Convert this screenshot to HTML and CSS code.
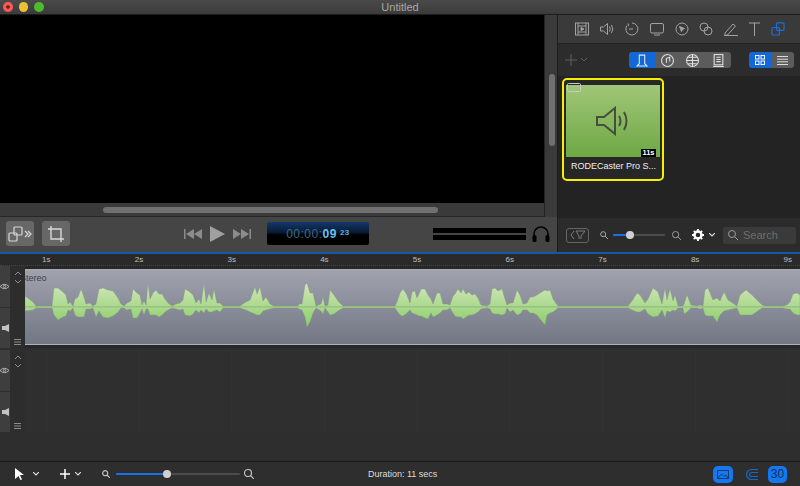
FILE: index.html
```html
<!DOCTYPE html>
<html>
<head>
  <title>Untitled</title>
  <link rel="stylesheet" href="styles.css">
</head>
<body>
  <div class="titlebar">
    <div class="lights">
      <span class="light red"></span>
      <span class="light yellow"></span>
      <span class="light green"></span>
    </div>
    <div class="title">Untitled</div>
  </div>

  <div class="main">
    <div class="stage">
      <div class="stage-top">
        <div class="viewer">
          <div class="preview"></div>
          <div class="hscroll"><div class="hthumb"></div></div>
        </div>
        <div class="vscroll"><div class="vthumb"></div></div>
      </div>
      <div class="controls">
        <button class="square-btn">
          <svg width="26" height="18" viewBox="0 0 26 18" fill="none" stroke="#d8d8d8" stroke-width="1.2"><rect x="7" y="2" width="8" height="8" rx="1"/><rect x="2" y="8" width="8" height="8" rx="1"/><path d="M18 6l3 3-3 3M21 6l3 3-3 3"/></svg>
        </button>
        <button class="square-btn">
          <svg width="18" height="18" viewBox="0 0 18 18" fill="none" stroke="#d8d8d8" stroke-width="1.4"><path d="M4 1v13h13M1 4h13v13"/></svg>
        </button>
        <div class="transport">
          <svg width="18" height="10" viewBox="0 0 18 10" fill="#8c8c8c"><rect width="1.5" height="10"/><path d="M10 0v10L2 5zM18 0v10L10 5z"/></svg>
          <svg width="15" height="16" viewBox="0 0 15 16" fill="#a0a0a0"><path d="M0 0l15 8L0 16z"/></svg>
          <svg width="18" height="10" viewBox="0 0 18 10" fill="#8c8c8c"><rect x="16.5" width="1.5" height="10"/><path d="M0 0v10l8-5zM8 0v10l8-5z"/></svg>
        </div>
        <div class="timecode"><span class="tc-dim">00:00:</span><b class="tc-sec">09</b><span class="tc-frames">23</span></div>
        <div class="meters"><div class="meter"></div><div class="meter"></div></div>
        <svg class="phones" width="18" height="16" viewBox="0 0 18 16" fill="none" stroke="#000" stroke-width="1.6"><path d="M2 11V8a7 7 0 0 1 14 0v3"/><rect x="0.5" y="9" width="4" height="7" rx="1.5" fill="#000" stroke="none"/><rect x="13.5" y="9" width="4" height="7" rx="1.5" fill="#000" stroke="none"/></svg>
      </div>
    </div>

    <div class="library">
      <div class="tools">
        <svg width="14" height="14" viewBox="0 0 14 14" fill="none" stroke="#a2a2a2"><rect x="0.5" y="1" width="13" height="12"/><path d="M3 1v12M11 1v12M3 4h8M3 10h8"/><path d="M6 5.5l3 1.5-3 1.500z" fill="#a2a2a2"/></svg>
        <svg width="14" height="14" viewBox="0 0 14 14" fill="none" stroke="#a2a2a2"><path d="M0.500 5h3l4-3.500v11l-4-3.500h-3zM9.500 4.500q1.500 2.500 0 5M11.500 3q2.500 4 0 8"/></svg>
        <svg width="14" height="14" viewBox="0 0 14 14" fill="none" stroke="#a2a2a2"><path d="M7 1a6 6 0 1 1-5 2.500"/><path d="M3 1.500l.5 2.500M4 7h4"/></svg>
        <svg width="14" height="14" viewBox="0 0 14 14" fill="none" stroke="#a2a2a2"><rect x="0.500" y="1.500" width="13" height="9.500" rx="1.500"/><path d="M4 13h6"/></svg>
        <svg width="14" height="14" viewBox="0 0 14 14" fill="none" stroke="#a2a2a2"><circle cx="7" cy="7" r="6"/><path d="M4.500 4.500l5 2-2 1-1 2z" fill="#a2a2a2"/></svg>
        <svg width="14" height="14" viewBox="0 0 14 14" fill="none" stroke="#a2a2a2"><circle cx="5" cy="5" r="4"/><circle cx="9" cy="9" r="4"/></svg>
        <svg width="14" height="14" viewBox="0 0 14 14" fill="none" stroke="#a2a2a2"><path d="M1 11l8-9 2.500 2-8 9-2.500.5zM0 13.500h14"/></svg>
        <svg width="11" height="14" viewBox="0 0 11 14" fill="none" stroke="#a2a2a2"><path d="M0 1h11M5.500 1v13"/></svg>
        <svg width="14" height="14" viewBox="0 0 14 14" fill="none" stroke="#1a6fd8" stroke-width="1.200"><rect x="5.500" y="0.800" width="7.500" height="7.500" rx="1"/><rect x="1" y="5.500" width="7.500" height="7.500" rx="1"/></svg>
      </div>

      <div class="lib-bar">
        <svg class="lib-plus" width="12" height="12" viewBox="0 0 12 12" stroke="#5e5e5e"><path d="M6 0v12M0 6h12"/></svg>
        <svg class="lib-chev" width="6" height="4" viewBox="0 0 6 4" fill="none" stroke="#5e5e5e"><path d="M0 0l3 3 3-3"/></svg>
        <div class="segments">
          <div class="seg on"><svg width="12" height="13" viewBox="0 0 11 12" fill="none" stroke="#e8e8e8"><path d="M3 1h5v8l2 2H1l2-2z"/></svg></div>
          <div class="seg"><svg width="13" height="13" viewBox="0 0 12 12" fill="none" stroke="#e0e0e0"><circle cx="6" cy="6" r="5.500"/><path d="M5 8V4l3-1v4"/></svg></div>
          <div class="seg"><svg width="13" height="13" viewBox="0 0 12 12" fill="none" stroke="#e0e0e0"><circle cx="6" cy="6" r="5.500"/><path d="M0.500 6h11M6 .5v11M2 3h8M2 9h8"/></svg></div>
          <div class="seg"><svg width="11" height="13" viewBox="0 0 10 12" fill="none" stroke="#e0e0e0"><rect x="1" y="0.500" width="8" height="9.500"/><path d="M3 3h4M3 5h4M3 7h4M0 11.500h10"/></svg></div>
        </div>
        <div class="view-toggle">
          <div class="vt on"><svg width="10" height="10" viewBox="0 0 10 10" fill="none" stroke="#fff"><rect x="0.500" y="0.500" width="3.500" height="3.500"/><rect x="6" y="0.500" width="3.500" height="3.500"/><rect x="0.500" y="6" width="3.500" height="3.500"/><rect x="6" y="6" width="3.500" height="3.500"/></svg></div>
          <div class="vt"><svg width="11" height="9" viewBox="0 0 11 9" stroke="#ddd"><path d="M0 .5h11M0 3.200h11M0 5.800h11M0 8.500h11"/></svg></div>
        </div>
      </div>

      <div class="bin">
        <div class="card">
          <div class="thumb">
            <svg class="thumb-check" width="14" height="10" viewBox="0 0 14 10" fill="none" stroke="#c9c9c9"><rect x="0.500" y="0.500" width="13" height="8" rx="1"/></svg>
            <svg width="34" height="30" viewBox="0 0 34 30" fill="none" stroke="#454f3c" stroke-width="2"><path d="M1 11h7L19 2v26L8 19H1zM23 10q3 5 0 10M28 6q5 9 0 18"/></svg>
            <span class="badge">11s</span>
          </div>
          <div class="card-name">RODECaster Pro S...</div>
        </div>
      </div>

      <div class="lib-foot">
        <div class="filter-btn"><svg width="16" height="10" viewBox="0 0 16 10" fill="none" stroke="#7c7c7c"><path d="M4 1L1 5l3 4M6 1h9l-4 5v3M6 1l3 5v3"/></svg></div>
        <svg class="zoom-s" width="8" height="8" viewBox="0 0 8 8" fill="none" stroke="#a8a8a8"><circle cx="3.200" cy="3.200" r="2.500"/><path d="M5 5l3 3"/></svg>
        <div class="slider lib-slider"><div class="slider-fill"></div><div class="slider-knob"></div></div>
        <svg class="zoom-l" width="9" height="9" viewBox="0 0 10 10" fill="none" stroke="#a8a8a8"><circle cx="4" cy="4" r="3.500"/><path d="M6.500 6.500L10 10"/></svg>
        <svg class="gear" width="12" height="12" viewBox="0 0 12 12"><circle cx="6" cy="6" r="3.500" fill="none" stroke="#fff" stroke-width="2.500"/><path d="M6 0v12M0 6h12M1.800 1.800l8.400 8.400M10.200 1.800l-8.400 8.400" stroke="#fff" stroke-width="1.800" stroke-dasharray="2 8"/></svg>
        <svg class="gear-chev" width="6" height="4" viewBox="0 0 6 4" fill="none" stroke="#ddd" stroke-width="1.200"><path d="M0 0l3 3 3-3"/></svg>
        <div class="search">
          <svg width="10" height="10" viewBox="0 0 10 10" fill="none" stroke="#9a9a9a"><circle cx="4" cy="4" r="3.500"/><path d="M6.500 6.500L10 10"/></svg>
          <span>Search</span>
        </div>
      </div>
    </div>
  </div>

  <div class="blue-line"></div>

  <div class="ruler">
    <span>1s</span><span>2s</span><span>3s</span><span>4s</span><span>5s</span><span>6s</span><span>7s</span><span>8s</span><span>9s</span>
  </div>

  <div class="track track-audio">
    <div class="track-strip">
      <div class="strip-cell">
        <svg width="9" height="7" viewBox="0 0 11 7" fill="none" stroke="#c4c4c4"><path d="M0 3.500Q5.500-2 11 3.500 5.500 9 0 3.500z"/><circle cx="5.500" cy="3.500" r="1.500"/></svg>
      </div>
      <div class="strip-cell">
        <svg width="7" height="8" viewBox="0 0 7 8" fill="#c4c4c4"><path d="M0 2h3l4-2v8L3 6H0z"/></svg>
      </div>
    </div>
    <div class="track-side">
      <svg width="6" height="11" viewBox="0 0 6 11" fill="none" stroke="#8c8c8c"><path d="M0 3l3-3 3 3M0 8l3 3 3-3"/></svg>
      <svg width="7" height="6" viewBox="0 0 7 6" stroke="#8c8c8c"><path d="M0 .5h7M0 3h7M0 5.500h7"/></svg>
    </div>
    <div class="clip">
      <span class="clip-label">Stereo</span>
      <svg class="wave" width="775" height="75" viewBox="25 -37 775 75">
        <defs>
          <linearGradient id="waveFill" gradientUnits="userSpaceOnUse" x1="0" y1="-22" x2="0" y2="18">
            <stop offset="0" stop-color="#cfe5b8"/>
            <stop offset="1" stop-color="#8ccf68"/>
          </linearGradient>
        </defs>
        <polygon fill="url(#waveFill)" stroke="#7f9a78" stroke-width="0.400" points="25,0 25,-11 33,-5 36,-1 52,-1 54,-19 58,-19 63,-15 66,-12 68,-3 70,-5 73,-1 75,-8 78,-10 81,-18 84,-10 86,-3 90,-4 93,-1 96,-3 99,-18 103,-19 108,-17 113,-16 118,-9 121,-3 124,-1 127,-4 131,-6 133,-18 137,-14 140,-12 142,-2 144,-6 146,-2 148,-24 150,-8 153,-14 156,-17 159,-13 162,-13 165,-8 168,-4 172,-1 176,-3 180,-4 183,-7 185,-18 190,-15 193,-12 196,-4 199,-8 201,-3 204,-24 206,-5 209,-14 212,-7 214,-18 217,-4 220,-4 223,-1 240,-1 246,-5 250,-7 255,-20 257,-13 260,-20 263,-6 266,-10 270,-3 274,-1 298,-1 299,-3 302,-3 305,-22 307,-24 310,-14 313,-14 316,-1 321,-3 323,-10 325,-1 328,-2 330,-17 334,-12 338,-6 343,-1 395,-1 397,-5 400,-14 403,-18 407,-12 410,-4 412,-15 415,-16 417,-9 419,-13 421,-18 425,-18 428,-12 431,-8 433,-3 437,-14 440,-14 443,-3 447,-3 450,-2 453,-11 455,-13 458,-18 461,-14 463,-18 466,-13 469,-15 472,-12 475,-13 478,-9 481,-2 487,-1 490,-3 492,-18 495,-19 498,-16 502,-18 505,-8 507,-2 510,-4 513,-4 517,-17 520,-12 523,-3 527,-4 530,-10 533,-10 537,-12 540,-14 545,-17 547,-16 550,-17 553,-8 558,-1 628,-1 632,-6 637,-14 640,-12 645,-4 648,-8 653,-19 658,-15 662,-3 665,-19 667,-7 670,-18 673,-6 675,-12 678,-1 683,-1 684,-3 687,-12 691,-2 697,-1 700,-2 703,-1 705,-17 708,-19 713,-7 717,-9 720,-6 724,-15 728,-7 737,-1 740,-12 746,-17 752,-12 762,-2 765,-1 783,-1 787,-2 790,-5 793,-13 797,-14 800,-12 800,0"/>
        <polygon fill="url(#waveFill)" stroke="#7f9a78" stroke-width="0.400" points="25,0 25,4 33,3 36,1 52,1 54,8 58,13 63,10 66,9 68,3 70,4 73,1 75,8 78,10 81,10 84,10 86,2 90,2 93,1 96,10 99,4 103,10 108,11 113,9 118,5 121,1 124,1 127,3 131,2 133,11 137,11 140,6 142,2 144,8 146,2 148,2 150,8 153,8 156,8 159,10 162,8 165,5 168,3 172,1 176,2 180,3 183,2 185,8 190,9 193,7 196,3 199,6 201,3 204,6 206,2 209,5 212,5 214,4 217,3 220,5 223,1 240,1 246,3 250,5 255,7 257,8 260,8 263,4 266,3 270,2 274,1 298,1 299,2 302,3 305,10 307,20 310,15 313,6 316,1 321,4 323,7 325,1 328,5 330,8 334,7 338,4 343,1 395,1 397,4 400,8 403,9 407,6 410,3 412,6 415,7 417,8 419,9 421,9 425,11 428,12 431,6 433,10 437,8 440,6 443,3 447,3 450,1 453,6 455,9 458,10 461,10 463,12 466,10 469,8 472,8 475,7 478,5 481,2 487,1 490,2 492,6 495,7 498,7 502,8 505,7 507,1 510,5 513,3 517,8 520,7 523,3 527,3 530,6 533,6 537,8 540,12 545,18 547,8 550,6 553,5 558,1 628,1 632,3 637,5 640,5 645,2 648,7 653,10 658,9 662,3 665,11 667,4 670,5 673,3 675,4 678,1 683,1 684,7 687,5 691,1 697,1 700,2 703,1 705,8 708,9 713,9 717,15 720,8 724,4 728,3 737,1 740,8 746,8 752,8 762,1 765,1 783,1 787,2 790,2 793,6 797,8 800,8 800,0"/>
      </svg>
    </div>
  </div>

  <div class="track track-empty">
    <div class="track-strip">
      <div class="strip-cell">
        <svg width="9" height="7" viewBox="0 0 11 7" fill="none" stroke="#c4c4c4"><path d="M0 3.500Q5.500-2 11 3.500 5.500 9 0 3.500z"/><circle cx="5.500" cy="3.500" r="1.500"/></svg>
      </div>
      <div class="strip-cell">
        <svg width="7" height="8" viewBox="0 0 7 8" fill="#c4c4c4"><path d="M0 2h3l4-2v8L3 6H0z"/></svg>
      </div>
    </div>
    <div class="track-side">
      <svg width="6" height="11" viewBox="0 0 6 11" fill="none" stroke="#8c8c8c"><path d="M0 3l3-3 3 3M0 8l3 3 3-3"/></svg>
      <svg width="7" height="6" viewBox="0 0 7 6" stroke="#8c8c8c"><path d="M0 .5h7M0 3h7M0 5.500h7"/></svg>
    </div>
    <div class="lane"></div>
  </div>

  <div class="spacer"></div>

  <div class="bottombar">
    <svg class="b-arrow" width="9" height="12" viewBox="0 0 9 12" fill="#fff"><path d="M0 0l9 7H5l2 4.500-1.500.5L3.500 8 0 11z"/></svg>
    <svg class="b-chev" width="6" height="4" viewBox="0 0 6 4" fill="none" stroke="#ddd" stroke-width="1.200"><path d="M0 0l3 3 3-3"/></svg>
    <svg class="b-plus" width="10" height="10" viewBox="0 0 10 10" stroke="#fff" stroke-width="1.500"><path d="M5 0v10M0 5h10"/></svg>
    <svg class="b-chev b-chev-near" width="6" height="4" viewBox="0 0 6 4" fill="none" stroke="#ddd" stroke-width="1.200"><path d="M0 0l3 3 3-3"/></svg>
    <svg class="b-zoom-s" width="8" height="8" viewBox="0 0 8 8" fill="none" stroke="#c0c0c0" stroke-width="1.200"><circle cx="3.200" cy="3.200" r="2.500"/><path d="M5 5l3 3"/></svg>
    <div class="slider b-slider"><div class="slider-fill"></div><div class="slider-knob"></div></div>
    <svg class="b-zoom-l" width="10" height="10" viewBox="0 0 10 10" fill="none" stroke="#c0c0c0" stroke-width="1.200"><circle cx="4" cy="4" r="3.500"/><path d="M6.500 6.500L10 10"/></svg>
    <div class="duration">Duration: 11 secs</div>
    <div class="pill"><svg width="12" height="9" viewBox="0 0 12 9" fill="none" stroke="#143c70"><rect x="0.500" y="0.500" width="11" height="8"/><path d="M1 8l3.500-4 2.500 2.500L9 5l2 3" /></svg></div>
    <svg class="magnet" width="13" height="13" viewBox="0 0 13 13" fill="none" stroke="#1668c8" stroke-width="1.200"><path d="M13 1.500H6.500a5 5 0 0 0 0 10H13M13 4.500H6.500a2 2 0 0 0 0 4H13"/></svg>
    <div class="pill pill-num">30</div>
  </div>
</body>
</html>
```

FILE: styles.css
```css
* {
  box-sizing: border-box;
}

body {
  margin: 0;
  width: 800px;
  height: 486px;
  overflow: hidden;
  display: flex;
  flex-direction: column;
  background-color: #2e2e2e;
  font-family: "Liberation Sans", Arial, sans-serif;
  color: #ddd;
}

svg {
  display: block;
  flex: none;
}

/* title bar */
.titlebar {
  height: 15px;
  flex: none;
  display: flex;
  align-items: center;
  background: linear-gradient(#4a4a4a, #3b3b3b);
  border-bottom: 1px solid #1c1c1c;
}

.lights {
  width: 44px;
  flex: none;
  display: flex;
  gap: 6px;
  padding-left: 3px;
}

.light {
  width: 10px;
  height: 10px;
  border-radius: 50%;
}

.red {
  background: radial-gradient(#8c1414 0 1.500px, #f85a55 2px);
}

.yellow {
  background-color: #e9c22f;
}

.green {
  background-color: #4dbb2e;
}

.title {
  flex: 1;
  padding-right: 44px;
  text-align: center;
  font-size: 11px;
  color: #a8a8a8;
}

/* top half */
.main {
  height: 237px;
  flex: none;
  display: flex;
}

.stage {
  width: 557px;
  flex: none;
  display: flex;
  flex-direction: column;
}

.stage-top {
  height: 202px;
  flex: none;
  display: flex;
}

.viewer {
  width: 544px;
  display: flex;
  flex-direction: column;
}

.preview {
  height: 188px;
  background-color: #000;
}

.hscroll {
  height: 14px;
  padding: 4px 0 0 103px;
  background-color: #3a3a3a;
  border-bottom: 1px solid #272727;
}

.hthumb {
  width: 335px;
  height: 6px;
  border-radius: 3px;
  background-color: #707070;
}

.vscroll {
  width: 13px;
  padding: 59px 0 0 4px;
  background-color: #3a3a3a;
  border-left: 1px solid #222;
}

.vthumb {
  width: 6px;
  height: 72px;
  border-radius: 3px;
  background-color: #707070;
}

.controls {
  flex: 1;
  display: flex;
  align-items: center;
  padding: 0 0 2px 6px;
  background-color: #454545;
}

.square-btn {
  width: 28px;
  height: 25px;
  margin-right: 8px;
  padding: 0;
  border: none;
  border-radius: 3px;
  background-color: #676767;
  display: flex;
  align-items: center;
  justify-content: center;
}

.transport {
  margin-left: 106px;
  width: 67px;
  display: flex;
  align-items: center;
  justify-content: space-between;
}

.timecode {
  width: 102px;
  height: 23px;
  margin-left: 16px;
  display: flex;
  align-items: center;
  justify-content: center;
  border-radius: 2px;
  background: linear-gradient(#12386a, #0a1c34 45%, #000 55%);
  font-size: 12px;
  letter-spacing: 0.500px;
}

.tc-dim {
  color: #37688c;
}

.tc-sec {
  color: #6cc0f2;
}

.tc-frames {
  margin: -3px 0 0 3px;
  font-size: 8px;
  font-weight: bold;
  color: #5aaee0;
}

.meters {
  width: 93px;
  margin-left: 64px;
  display: flex;
  flex-direction: column;
  gap: 2px;
}

.meter {
  height: 5px;
  background-color: #000;
}

.phones {
  margin-left: 6px;
}

/* library panel */
.library {
  flex: 1;
  display: flex;
  flex-direction: column;
  border-left: 1px solid #1c1c1c;
  background-color: #2b2b2b;
}

.tools {
  height: 29px;
  flex: none;
  display: flex;
  align-items: center;
  justify-content: space-between;
  padding: 0 15px 0 17px;
  background-color: #3a3a3a;
  border-bottom: 1px solid #222;
}

.lib-bar {
  height: 32px;
  flex: none;
  display: flex;
  align-items: center;
  padding-left: 7px;
  background-color: #2c2c2c;
}

.lib-chev {
  margin-left: 4px;
}

.segments {
  display: flex;
  margin-left: 42px;
  border-radius: 3px;
  overflow: hidden;
}

.seg {
  width: 25.500px;
  height: 16px;
  display: flex;
  align-items: center;
  justify-content: center;
  background-color: #5c5c5c;
}

.seg.on {
  background-color: #1268d6;
}

.view-toggle {
  display: flex;
  margin-left: 18px;
  border-radius: 3px;
  overflow: hidden;
}

.vt {
  width: 22.500px;
  height: 16px;
  display: flex;
  align-items: center;
  justify-content: center;
  background-color: #5c5c5c;
}

.vt.on {
  background-color: #1268d6;
}

.bin {
  flex: 1;
  padding: 2px 0 0 4px;
  background-color: #232323;
}

.card {
  width: 102px;
  height: 103px;
  padding: 5px 2px 0;
  border: 2px solid #f6f000;
  border-radius: 5px;
  background-color: #272727;
}

.thumb {
  height: 72px;
  position: relative;
  display: flex;
  align-items: center;
  justify-content: center;
  background: linear-gradient(#a0c678, #6ea844);
}

.thumb-check {
  position: absolute;
  left: 1px;
  top: -2px;
}

.badge {
  position: absolute;
  right: 4px;
  bottom: 0;
  width: 15px;
  height: 8px;
  background-color: #000;
  color: #fff;
  font-size: 7.500px;
  font-weight: bold;
  line-height: 8px;
  text-align: center;
}

.card-name {
  padding: 4px 0 0 5px;
  font-size: 9px;
  color: #eee;
  white-space: nowrap;
}

.lib-foot {
  height: 35px;
  flex: none;
  display: flex;
  align-items: center;
  padding-left: 8px;
  background-color: #2b2b2b;
  border-top: 1px solid #222;
}

.filter-btn {
  width: 23px;
  height: 15px;
  display: flex;
  align-items: center;
  justify-content: center;
  border: 1px solid #666;
  border-radius: 3px;
}

.zoom-s {
  margin-left: 11px;
}

.slider {
  height: 2px;
  position: relative;
  background-color: #4c4c4c;
  border-radius: 1px;
}

.slider-fill {
  height: 2px;
  background-color: #1a70e8;
  border-radius: 1px;
}

.slider-knob {
  position: absolute;
  top: -3px;
  width: 8px;
  height: 8px;
  border-radius: 50%;
  background-color: #d0d0d0;
}

.lib-slider {
  width: 52px;
  margin-left: 5px;
}

.lib-slider .slider-fill {
  width: 14px;
}

.lib-slider .slider-knob {
  left: 13px;
}

.zoom-l {
  margin-left: 7px;
}

.gear {
  margin-left: 11px;
}

.gear-chev {
  margin-left: 5px;
}

.search {
  width: 73px;
  height: 17px;
  margin-left: 8px;
  display: flex;
  align-items: center;
  gap: 5px;
  padding-left: 5px;
  border-radius: 2px;
  background-color: #3a3a3a;
  font-size: 11px;
  color: #6e6e6e;
}

.blue-line {
  height: 2px;
  flex: none;
  background-color: #1557a8;
}

/* timeline */
.ruler {
  height: 12px;
  flex: none;
  display: flex;
  background-color: #2a2a2a;
  border-bottom: 1px dotted #444;
}

.ruler span {
  width: 92.700px;
  flex: none;
  text-align: center;
  font-size: 8px;
  line-height: 11px;
  color: #c0c0c0;
}

.track {
  flex: none;
  display: flex;
}

.track-audio {
  height: 82px;
  background-color: #272727;
}

.track-empty {
  height: 84px;
  padding-top: 2px;
}

.track-strip {
  width: 10px;
  display: flex;
  flex-direction: column;
  background-color: #3e3e3e;
  overflow: hidden;
}

.strip-cell {
  flex: 1;
  display: flex;
  align-items: center;
  justify-content: flex-end;
  padding-right: 1px;
}

.strip-cell + .strip-cell {
  border-top: 1px solid #2e2e2e;
}

.track-side {
  width: 15px;
  display: flex;
  flex-direction: column;
  justify-content: space-between;
  align-items: center;
  padding: 6px 0 3px;
  background-color: #2d2d2d;
}

.clip {
  flex: 1;
  height: 76px;
  margin-top: 3px;
  position: relative;
  overflow: hidden;
  background: linear-gradient(#a0a3ae, #737784);
  border-top: 1px solid #a8aab4;
  border-bottom: 1px solid #b0b2b8;
}

.clip-label {
  position: absolute;
  left: -5px;
  top: 3px;
  font-size: 9px;
  color: #3e3e44;
}

.lane {
  flex: 1;
  background-color: #2f2f2f;
  background-image: linear-gradient(to right, #333 1px, transparent 1px);
  background-size: 92.700px 100%;
  background-position: 21px 0;
}

.spacer {
  flex: 1;
}

/* bottom bar */
.bottombar {
  height: 25px;
  flex: none;
  display: flex;
  align-items: center;
  padding-left: 15px;
  background-color: #2e2e2e;
  border-top: 1px solid #1a1a1a;
}

.b-chev {
  margin-left: 9px;
}

.b-chev-near {
  margin-left: 5px;
}

.b-plus {
  margin-left: 21px;
}

.b-zoom-s {
  margin-left: 21px;
}

.b-slider {
  width: 124px;
  margin-left: 6px;
}

.b-slider .slider-fill {
  width: 51px;
}

.b-slider .slider-knob {
  left: 47px;
}

.b-zoom-l {
  margin-left: 4px;
}

.duration {
  margin-left: 114px;
  width: 345px;
  font-size: 9px;
  color: #ddd;
}

.pill {
  width: 20px;
  height: 17px;
  display: flex;
  align-items: center;
  justify-content: center;
  border-radius: 5px;
  background-color: #1478f0;
}

.magnet {
  margin: 0 10px 0 12px;
}

.pill-num {
  width: 19px;
  font-size: 12px;
  color: #10305a;
}
```
